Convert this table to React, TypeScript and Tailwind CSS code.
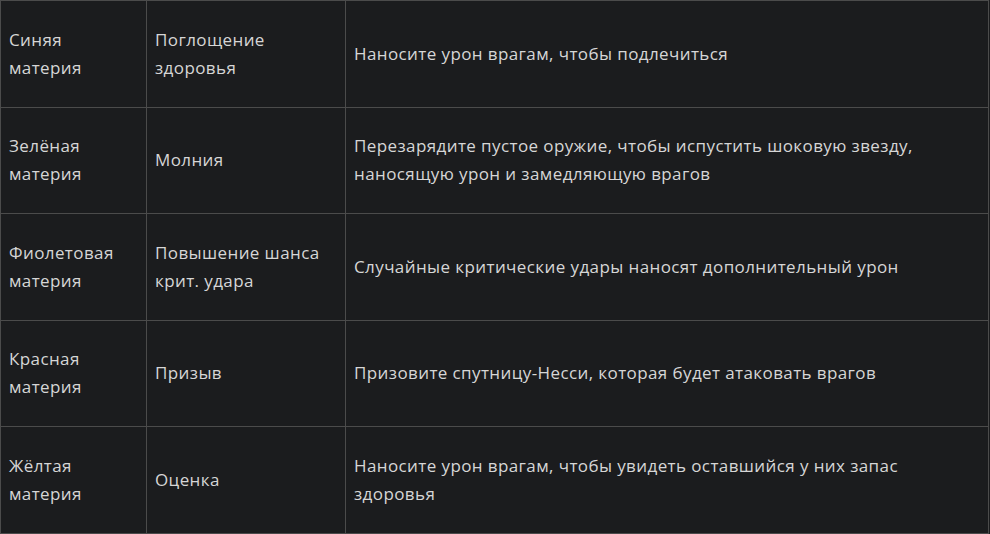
import React from "react";

const rows = [
  { color: "Синяя материя", name: "Поглощение здоровья", desc: "Наносите урон врагам, чтобы подлечиться" },
  {
    color: "Зелёная материя",
    name: "Молния",
    desc: "Перезарядите пустое оружие, чтобы испустить шоковую звезду, наносящую урон и замедляющую врагов",
  },
  {
    color: "Фиолетовая материя",
    name: "Повышение шанса крит. удара",
    desc: "Случайные критические удары наносят дополнительный урон",
  },
  { color: "Красная материя", name: "Призыв", desc: "Призовите спутницу-Несси, которая будет атаковать врагов" },
  {
    color: "Жёлтая материя",
    name: "Оценка",
    desc: "Наносите урон врагам, чтобы увидеть оставшийся у них запас здоровья",
  },
];

const App = () => {
  return (
    <div className="min-h-screen bg-[#1b1c1e] text-[#d6d6d6] font-['Open_Sans',sans-serif]">
      <table className="w-[989px] border-collapse border border-[#4b4b4b] text-[17px] leading-[28px] tracking-[0.4px]">
        <tbody>
          {rows.map((row) => (
            <tr key={row.color} className="h-[106.5px]">
              <td className="w-[146px] border border-[#4b4b4b] pl-2 pr-6 align-middle">{row.color}</td>
              <td className="w-[199px] border border-[#4b4b4b] px-2 align-middle">{row.name}</td>
              <td className="border border-[#4b4b4b] px-2 align-middle">
                <div className="max-w-[590px]">{row.desc}</div>
              </td>
            </tr>
          ))}
        </tbody>
      </table>
    </div>
  );
};

export default App;
